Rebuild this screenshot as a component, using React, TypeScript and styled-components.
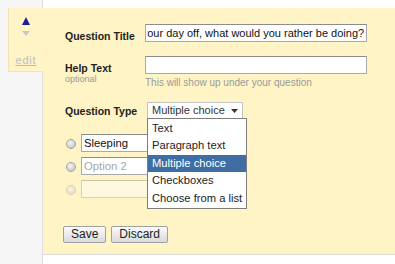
import React, { useLayoutEffect, useRef } from "react";
import styled, { createGlobalStyle } from "styled-components";

const GlobalStyle = createGlobalStyle`
  html, body { margin: 0; padding: 0; background: #fff; }
  body { font-family: "Liberation Sans", Arial, sans-serif; color: #222; }
  * { box-sizing: border-box; }
`;

const YELLOW = "#fef4c6";

const Page = styled.div`
  display: flex;
  min-height: 100vh;
`;

const Sidebar = styled.div`
  width: 43px;
  flex: none;
  background: #f5f5f5;
  border-right: 1px solid #dedede;
  padding-top: 8px;
  display: flex;
  flex-direction: column;
  align-items: flex-start;
`;

const Tab = styled.div`
  margin-left: 8px;
  margin-right: -1px;
  width: 35px;
  height: 64px;
  background: ${YELLOW};
  border-left: 1px solid #efe4b0;
  border-bottom: 1px solid #efe4b0;
  display: flex;
  flex-direction: column;
  align-items: center;
  padding-top: 9px;
`;

const Arrow = styled.svg<{ $gap?: number }>`
  display: block;
  margin-top: ${(p) => p.$gap ?? 0}px;
`;

const EditLink = styled.a`
  margin-top: 18px;
  font-size: 11px;
  line-height: 13px;
  letter-spacing: 0.8px;
  color: #bdbdbd;
  text-decoration: underline;
`;

const Main = styled.div`
  flex: 1;
  min-width: 0;
  padding-top: 8px;
`;

const Panel = styled.div`
  background: ${YELLOW};
  border-bottom: 1px solid #dcdcdc;
  padding: 16px 0 11px 20px;
`;

const FieldRow = styled.div<{ $top?: number }>`
  display: flex;
  align-items: flex-start;
  margin-top: ${(p) => p.$top ?? 0}px;
`;

const Label = styled.div<{ $pad?: number }>`
  width: 82px;
  flex: none;
  padding-left: 2px;
  padding-top: ${(p) => p.$pad ?? 6}px;
  font-weight: bold;
  font-size: 10.5px;
  line-height: 12px;
  color: #222;
`;

const SubLabel = styled.span`
  display: block;
  font-weight: normal;
  font-size: 9px;
  line-height: 11px;
  color: #9a9a9a;
`;

const FieldCol = styled.div`
  display: flex;
  flex-direction: column;
`;

const TextInput = styled.input`
  display: block;
  width: 222px;
  height: 18px;
  margin: 0;
  background: #fff;
  border: 1px solid #a9a9a9;
  border-top-color: #8c8c8c;
  border-radius: 0;
  font-family: "Liberation Sans", Arial, sans-serif;
  font-size: 11px;
  line-height: 16px;
  padding: 0 2px 0 1px;
  color: #111;
  outline: none;
`;

const Hint = styled.div`
  margin-top: 3px;
  font-size: 10px;
  line-height: 12px;
  color: #9a9a9a;
`;

const SelectWrap = styled.div`
  position: relative;
  margin-left: 2px;
`;

const Select = styled.div`
  width: 96px;
  height: 17px;
  background: #fff;
  border: 1px solid #c4c4c4;
  font-size: 11px;
  line-height: 15px;
  padding: 0 4px;
  color: #333;
  display: flex;
  align-items: center;
  justify-content: space-between;
`;

const Dropdown = styled.ul`
  position: absolute;
  z-index: 2;
  top: 16px;
  left: 0;
  width: 100px;
  margin: 0;
  padding: 1px 0;
  list-style: none;
  background: #fff;
  border: 1px solid #7d7d7d;
`;

const Item = styled.li<{ $active?: boolean }>`
  height: 17.4px;
  line-height: 17px;
  padding-left: 4px;
  font-size: 11.2px;
  white-space: nowrap;
  color: ${(p) => (p.$active ? "#fff" : "#222")};
  background: ${(p) => (p.$active ? "#3f6ea4" : "transparent")};
`;

const Options = styled.div`
  margin-top: 15px;
  padding-left: 3px;
  display: flex;
  flex-direction: column;
  gap: 5px;
`;

const OptionRow = styled.div<{ $dim?: boolean }>`
  display: flex;
  align-items: center;
  gap: 5px;
  height: 18px;
  opacity: ${(p) => (p.$dim ? 0.45 : 1)};
`;

const Radio = styled.span`
  width: 10px;
  height: 10px;
  border-radius: 50%;
  border: 1px solid #a2a2a2;
  background: radial-gradient(circle at 40% 35%, #f6f6f6 0%, #c4c4c4 85%);
  flex: none;
  margin-top: 2px;
`;

const OptionBox = styled.div<{ $placeholder?: boolean }>`
  width: 150px;
  height: 18px;
  background: #fff;
  border: 1px solid #a9a9a9;
  border-top-color: #8c8c8c;
  font-size: 11.3px;
  line-height: 16px;
  padding: 0 2px;
  color: ${(p) => (p.$placeholder ? "#a8a8a8" : "#111")};
`;

const Buttons = styled.div`
  margin-top: 28px;
  display: flex;
  gap: 5px;
`;

const Button = styled.button`
  height: 17px;
  padding: 0 7px;
  font-family: "Liberation Sans", Arial, sans-serif;
  font-size: 12px;
  line-height: 15px;
  color: #222;
  background: linear-gradient(#fbfbfb, #dadada);
  border: 1px solid #a0a0a0;
  border-radius: 2px;
`;

export default function App() {
  const titleRef = useRef<HTMLInputElement>(null);
  useLayoutEffect(() => {
    if (titleRef.current) titleRef.current.scrollLeft = titleRef.current.scrollWidth;
  }, []);
  const types = ["Text", "Paragraph text", "Multiple choice", "Checkboxes", "Choose from a list"];
  return (
    <>
      <GlobalStyle />
      <Page>
        <Sidebar>
          <Tab>
            <Arrow width="8" height="8" viewBox="0 0 8 8">
              <polygon points="4,0 8,8 0,8" fill="#1b2199" />
            </Arrow>
            <Arrow $gap={6} width="8" height="5" viewBox="0 0 8 5">
              <polygon points="0,0 8,0 4,5" fill="#c8c8c8" />
            </Arrow>
            <EditLink>edit</EditLink>
          </Tab>
        </Sidebar>
        <Main>
          <Panel>
            <FieldRow>
              <Label>Question Title</Label>
              <TextInput
                ref={titleRef}
                readOnly
                value="On your day off, what would you rather be doing?"
              />
            </FieldRow>
            <FieldRow $top={14}>
              <Label>
                Help Text
                <SubLabel>optional</SubLabel>
              </Label>
              <FieldCol>
                <TextInput readOnly value="" />
                <Hint>This will show up under your question</Hint>
              </FieldCol>
            </FieldRow>
            <FieldRow $top={13}>
              <Label $pad={3}>Question Type</Label>
              <SelectWrap>
                <Select>
                  <span>Multiple choice</span>
                  <svg width="7" height="4" viewBox="0 0 7 4">
                    <polygon points="0,0 7,0 3.5,4" fill="#333" />
                  </svg>
                </Select>
                <Dropdown>
                  {types.map((t) => (
                    <Item key={t} $active={t === "Multiple choice"}>
                      {t}
                    </Item>
                  ))}
                </Dropdown>
              </SelectWrap>
            </FieldRow>
            <Options>
              <OptionRow>
                <Radio />
                <OptionBox>Sleeping</OptionBox>
              </OptionRow>
              <OptionRow>
                <Radio />
                <OptionBox $placeholder>Option 2</OptionBox>
              </OptionRow>
              <OptionRow $dim>
                <Radio />
                <OptionBox />
              </OptionRow>
            </Options>
            <Buttons>
              <Button>Save</Button>
              <Button>Discard</Button>
            </Buttons>
          </Panel>
        </Main>
      </Page>
    </>
  );
}
